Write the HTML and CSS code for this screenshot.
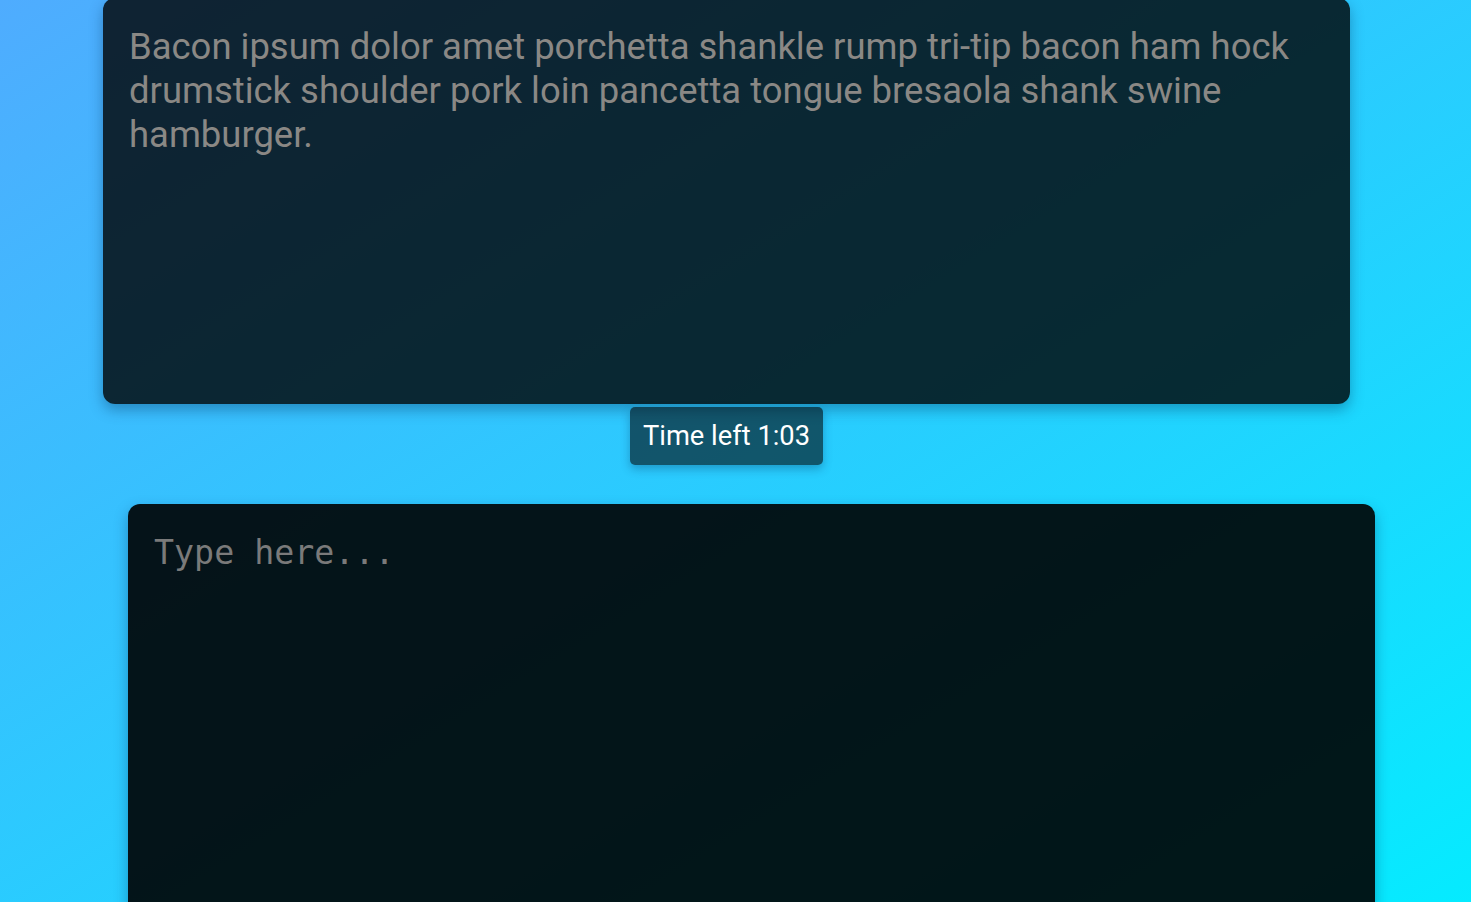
FILE: index.html
```html
<!DOCTYPE html>
<html lang="en">
<head>
<meta charset="utf-8">
<title>Typing test</title>
<link rel="stylesheet" href="styles.css">
</head>
<body>
<main class="page">
  <section class="quote">
    <p class="quote-text">Bacon ipsum dolor amet porchetta shankle rump tri-tip bacon ham hock drumstick shoulder pork loin pancetta tongue bresaola shank swine hamburger.</p>
  </section>
  <div class="timer-row">
    <div class="timer">Time left 1:03</div>
  </div>
  <textarea class="input" placeholder="Type here..."></textarea>
</main>
</body>
</html>
```
FILE: styles.css
```css
html, body {
  margin: 0;
  padding: 0;
  height: 100%;
  overflow: hidden;
}
body {
  background: linear-gradient(to bottom right, #4facfe 0%, #05ebff 100%);
  font-family: Roboto, "Liberation Sans", sans-serif;
}
.page {
  display: flex;
  flex-direction: column;
  margin-top: -2px;
}
.quote {
  margin-left: 103px;
  width: 1247px;
  height: 406px;
  box-sizing: border-box;
  padding: 27px 24px 26px 26px;
  border-radius: 12px;
  background: rgba(0, 0, 0, 0.8);
  box-shadow: 0 6px 14px rgba(0, 40, 80, 0.35);
}
.quote-text {
  margin: 0;
  color: #8a8885;
  font-size: 36.45px;
  line-height: 44px;
}
.timer-row {
  display: flex;
  margin-top: 3px;
  margin-left: 630px;
}
.timer {
  width: 193px;
  height: 58px;
  box-sizing: border-box;
  display: flex;
  align-items: center;
  justify-content: center;
  border-radius: 5px;
  background: rgba(0, 0, 0, 0.58);
  color: #ffffff;
  font-size: 27.3px;
  box-shadow: 0 4px 10px rgba(0, 40, 80, 0.3);
}
.input {
  display: block;
  margin-top: 39px;
  margin-left: 128px;
  width: 1247px;
  height: 480px;
  box-sizing: border-box;
  padding: 27px 26px;
  border: none;
  outline: none;
  resize: none;
  border-radius: 12px;
  background: rgba(0, 0, 0, 0.9);
  color: #cccccc;
  font-family: "DejaVu Sans Mono", monospace;
  font-size: 33.3px;
  line-height: 44px;
  box-shadow: 0 6px 14px rgba(0, 40, 80, 0.35);
}
.input::placeholder {
  color: #7a7a7a;
  opacity: 1;
}
```
